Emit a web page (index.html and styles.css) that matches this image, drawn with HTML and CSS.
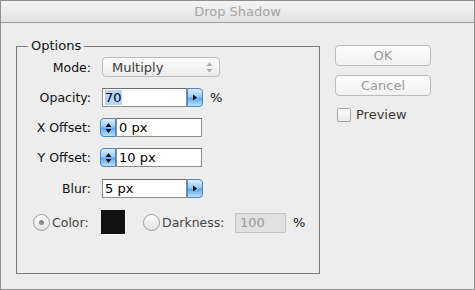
FILE: index.html
```html
<!DOCTYPE html>
<html lang="en">
<head>
  <meta charset="UTF-8">
  <title>Drop Shadow</title>
  <link rel="stylesheet" href="styles.css">
</head>
<body>
  <div class="window">
    <div class="titlebar">Drop Shadow</div>
    <div class="dialog">
      <fieldset class="options">
        <legend>Options</legend>
        <div class="rows">
          <div class="row">
            <label class="field-label">Mode:</label>
            <div class="popup">
              <span>Multiply</span>
              <svg class="popup-arrows" width="7" height="11" viewBox="0 0 7 11">
                <path d="M3.5 0.5 L6.5 4 L0.5 4 Z M3.5 10.5 L6.5 7 L0.5 7 Z" fill="#a8a8a8"/>
              </svg>
            </div>
          </div>

          <div class="row">
            <label class="field-label">Opacity:</label>
            <div class="combo">
              <span class="text-field"><span class="selected">70</span></span>
              <span class="aqua drop-btn">
                <svg width="6" height="7" viewBox="0 0 6 7"><path d="M1 0.5 L5 3.5 L1 6.5 Z" fill="#111"/></svg>
              </span>
            </div>
            <span class="unit">%</span>
          </div>

          <div class="row">
            <label class="field-label">X Offset:</label>
            <div class="spin">
              <span class="aqua stepper">
                <svg width="7" height="12" viewBox="0 0 7 12"><path d="M3.5 1 L6.5 5 L0.5 5 Z M3.5 11 L6.5 7 L0.5 7 Z" fill="#111"/></svg>
              </span>
              <span class="text-field wide">0 px</span>
            </div>
          </div>

          <div class="row">
            <label class="field-label">Y Offset:</label>
            <div class="spin">
              <span class="aqua stepper">
                <svg width="7" height="12" viewBox="0 0 7 12"><path d="M3.5 1 L6.5 5 L0.5 5 Z M3.5 11 L6.5 7 L0.5 7 Z" fill="#111"/></svg>
              </span>
              <span class="text-field wide">10 px</span>
            </div>
          </div>

          <div class="row blur-row">
            <label class="field-label">Blur:</label>
            <div class="combo">
              <span class="text-field">5 px</span>
              <span class="aqua drop-btn">
                <svg width="6" height="7" viewBox="0 0 6 7"><path d="M1 0.5 L5 3.5 L1 6.5 Z" fill="#111"/></svg>
              </span>
            </div>
          </div>

          <div class="row color-row">
            <span class="radio checked"><span class="dot"></span></span>
            <span class="radio-label color-label">Color:</span>
            <span class="swatch"></span>
            <span class="radio"></span>
            <span class="radio-label darkness-label">Darkness:</span>
            <span class="text-field disabled">100</span>
            <span class="unit">%</span>
          </div>
        </div>
      </fieldset>

      <div class="side">
        <button class="push">OK</button>
        <button class="push">Cancel</button>
        <label class="check"><span class="box"></span>Preview</label>
      </div>
    </div>
  </div>
</body>
</html>
```

FILE: styles.css
```css
body {
  margin: 0;
  font-family: "DejaVu Sans", "Liberation Sans", sans-serif;
  font-size: 12.5px;
  color: #111;
  background: #ededed;
}

.window {
  width: 475px;
  height: 290px;
  box-sizing: border-box;
  border: 1px solid #8f8f8f;
  background: #ededed;
}

.titlebar {
  height: 21px;
  line-height: 21px;
  text-align: center;
  font-size: 13px;
  color: #a4a4a4;
  background: linear-gradient(#f5f5f5, #e2e2e2);
  border-bottom: 1px solid #9c9c9c;
}

.dialog {
  display: flex;
  padding: 15px 0 0 15px;
}

/* options group */
.options {
  margin: 0;
  padding: 3px 11px 0;
  width: 304px;
  height: 236px;
  box-sizing: border-box;
  border: 1px solid #7b7b7b;
  min-width: 0;
}

.options legend {
  padding: 0 3px;
  font-size: 13px;
  line-height: 16px;
  color: #111;
}

.rows {
  display: flex;
  flex-direction: column;
  gap: 11px;
}

.row {
  display: flex;
  align-items: center;
  height: 19px;
}

.row:first-child {
  height: 20px;
}

.blur-row {
  margin-top: 1px;
}

.field-label {
  width: 63px;
  margin-right: 11px;
  text-align: right;
}

.popup {
  width: 118px;
  height: 20px;
  box-sizing: border-box;
  display: flex;
  align-items: center;
  justify-content: space-between;
  padding: 0 6px 0 9px;
  border: 1px solid #bdbdbd;
  border-radius: 4px;
  background: linear-gradient(#fbfbfb, #ececec);
  color: #3c3c3c;
  font-size: 13px;
}

.combo,
.spin {
  display: flex;
  height: 19px;
}

.text-field {
  width: 85px;
  height: 19px;
  box-sizing: border-box;
  border: 1px solid #8d8d8d;
  border-top-color: #6f6f6f;
  background: #fff;
  padding: 0 2px;
  line-height: 17px;
  font-size: 13px;
  color: #000;
}

.text-field.wide {
  width: 86px;
}

.selected {
  background: #b5d3fb;
}

.aqua {
  display: flex;
  align-items: center;
  justify-content: center;
  width: 16px;
  height: 19px;
  box-sizing: border-box;
  border: 1px solid #4f84c0;
  background: linear-gradient(#dcefff, #93cbf8 45%, #5eaaf0 55%, #b8e1ff);
}

.drop-btn {
  border-radius: 0 4px 4px 0;
}

.stepper {
  margin-left: -2px;
  border-radius: 4px 0 0 4px;
}

.unit {
  margin-left: 7px;
  font-size: 13px;
}

/* color / darkness row */
.color-row {
  height: 25px;
  margin-top: 1px;
}

.radio {
  width: 17px;
  height: 17px;
  box-sizing: border-box;
  border: 1px solid #9d9d9d;
  border-radius: 50%;
  background: linear-gradient(#fdfdfd, #e3e3e3);
  display: flex;
  align-items: center;
  justify-content: center;
  margin-left: 17px;
}

.radio.checked {
  margin-left: 5px;
}

.dot {
  width: 5px;
  height: 5px;
  border-radius: 50%;
  background: #8a8a8a;
}

.radio-label {
  margin-left: 2px;
  color: #444;
}

.color-label {
  width: 49px;
}

.darkness-label {
  width: 73px;
}

.swatch {
  width: 25px;
  height: 25px;
  box-sizing: border-box;
  background: #111113;
  border-right: 1px solid #fafafa;
  border-bottom: 1px solid #fafafa;
}

.text-field.disabled {
  width: 51px;
  height: 20px;
  background: #e1e1e1;
  border-color: #c2c2c2;
  color: #9a9a9a;
  padding-left: 4px;
}

/* right column */
.side {
  display: flex;
  flex-direction: column;
  gap: 9px;
  margin: 7px 0 0 15px;
}

.push {
  width: 96px;
  height: 21px;
  padding: 0;
  border: 1px solid #bcbcbc;
  border-radius: 4px;
  background: linear-gradient(#fdfdfd, #f1f1f1);
  font-family: inherit;
  font-size: 13px;
  color: #9b9b9b;
}

.check {
  display: flex;
  align-items: center;
  gap: 5px;
  margin: 2px 0 0 2px;
  color: #3a3a3a;
  font-size: 13px;
}

.box {
  width: 14px;
  height: 14px;
  box-sizing: border-box;
  border: 1px solid #a7a7a7;
  border-radius: 2px;
  background: linear-gradient(#fefefe, #eaeaea);
}
```
